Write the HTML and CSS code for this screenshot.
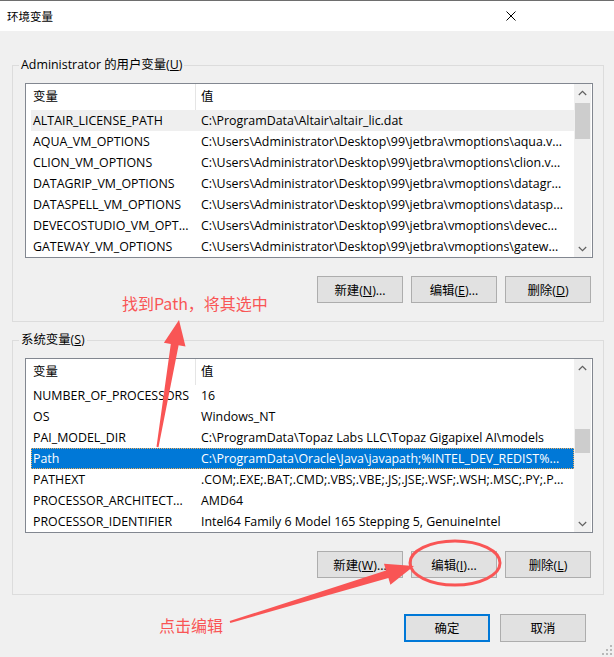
FILE: index.html
```html
<!DOCTYPE html>
<html lang="zh-CN">
<head>
<meta charset="utf-8">
<title>环境变量</title>
<link rel="stylesheet" href="styles.css">
</head>
<body>
<div class="window">
  <header class="titlebar">
    <span class="title">环境变量</span>
    <svg class="close" width="10" height="10" viewBox="0 0 10 10"><path d="M0.5 0.5 L9.5 9.5 M9.5 0.5 L0.5 9.5" stroke="#000" stroke-width="1" fill="none"/></svg>
  </header>
  <main class="content">
    <fieldset class="group">
      <legend>Administrator 的用户变量(<u>U</u>)</legend>
      <div class="list">
        <div class="table">
          <div class="thead"><span class="h1">变量</span><span class="h2">值</span></div>
          <div class="row inactive"><span class="c1">ALTAIR_LICENSE_PATH</span><span class="c2">C:\ProgramData\Altair\altair_lic.dat</span></div>
          <div class="row"><span class="c1">AQUA_VM_OPTIONS</span><span class="c2">C:\Users\Administrator\Desktop\99\jetbra\vmoptions\aqua.v...</span></div>
          <div class="row"><span class="c1">CLION_VM_OPTIONS</span><span class="c2">C:\Users\Administrator\Desktop\99\jetbra\vmoptions\clion.v...</span></div>
          <div class="row"><span class="c1">DATAGRIP_VM_OPTIONS</span><span class="c2">C:\Users\Administrator\Desktop\99\jetbra\vmoptions\datagr...</span></div>
          <div class="row"><span class="c1">DATASPELL_VM_OPTIONS</span><span class="c2">C:\Users\Administrator\Desktop\99\jetbra\vmoptions\datasp...</span></div>
          <div class="row"><span class="c1">DEVECOSTUDIO_VM_OPT...</span><span class="c2">C:\Users\Administrator\Desktop\99\jetbra\vmoptions\devec...</span></div>
          <div class="row"><span class="c1">GATEWAY_VM_OPTIONS</span><span class="c2">C:\Users\Administrator\Desktop\99\jetbra\vmoptions\gatew...</span></div>
        </div>
        <div class="scrollbar">
          <div class="sb-btn"><svg width="9" height="6" viewBox="0 0 9 6"><path d="M0.8 5 L4.5 1.3 L8.2 5" stroke="#606060" stroke-width="1.2" fill="none"/></svg></div>
          <div class="track"><div class="thumb t1"></div></div>
          <div class="sb-btn"><svg width="9" height="6" viewBox="0 0 9 6"><path d="M0.8 1 L4.5 4.7 L8.2 1" stroke="#606060" stroke-width="1.2" fill="none"/></svg></div>
        </div>
      </div>
      <div class="btns">
        <button type="button">新建(<u>N</u>)...</button>
        <button type="button">编辑(<u>E</u>)...</button>
        <button type="button">删除(<u>D</u>)</button>
      </div>
    </fieldset>

    <fieldset class="group sys">
      <legend>系统变量(<u>S</u>)</legend>
      <div class="list">
        <div class="table">
          <div class="thead"><span class="h1">变量</span><span class="h2">值</span></div>
          <div class="row"><span class="c1">NUMBER_OF_PROCESSORS</span><span class="c2">16</span></div>
          <div class="row"><span class="c1">OS</span><span class="c2">Windows_NT</span></div>
          <div class="row"><span class="c1">PAI_MODEL_DIR</span><span class="c2">C:\ProgramData\Topaz Labs LLC\Topaz Gigapixel AI\models</span></div>
          <div class="row selected"><span class="c1">Path</span><span class="c2">C:\ProgramData\Oracle\Java\javapath;%INTEL_DEV_REDIST%...</span></div>
          <div class="row"><span class="c1">PATHEXT</span><span class="c2">.COM;.EXE;.BAT;.CMD;.VBS;.VBE;.JS;.JSE;.WSF;.WSH;.MSC;.PY;.P...</span></div>
          <div class="row"><span class="c1">PROCESSOR_ARCHITECT...</span><span class="c2">AMD64</span></div>
          <div class="row"><span class="c1">PROCESSOR_IDENTIFIER</span><span class="c2">Intel64 Family 6 Model 165 Stepping 5, GenuineIntel</span></div>
        </div>
        <div class="scrollbar">
          <div class="sb-btn"><svg width="9" height="6" viewBox="0 0 9 6"><path d="M0.8 5 L4.5 1.3 L8.2 5" stroke="#606060" stroke-width="1.2" fill="none"/></svg></div>
          <div class="track"><div class="thumb t2"></div></div>
          <div class="sb-btn"><svg width="9" height="6" viewBox="0 0 9 6"><path d="M0.8 1 L4.5 4.7 L8.2 1" stroke="#606060" stroke-width="1.2" fill="none"/></svg></div>
        </div>
      </div>
      <div class="btns">
        <button type="button">新建(<u>W</u>)...</button>
        <button type="button">编辑(<u>I</u>)...</button>
        <button type="button">删除(<u>L</u>)</button>
      </div>
    </fieldset>

    <div class="footer">
      <button type="button" class="primary">确定</button>
      <button type="button">取消</button>
    </div>
  </main>

  <svg class="grip" width="12" height="12" viewBox="0 0 12 12">
    <rect x="9" y="1" width="2" height="2" fill="#b8b8b8"/>
    <rect x="5" y="5" width="2" height="2" fill="#b8b8b8"/>
    <rect x="9" y="5" width="2" height="2" fill="#b8b8b8"/>
    <rect x="1" y="9" width="2" height="2" fill="#b8b8b8"/>
    <rect x="5" y="9" width="2" height="2" fill="#b8b8b8"/>
    <rect x="9" y="9" width="2" height="2" fill="#b8b8b8"/>
  </svg>

  <svg class="annot" width="614" height="657" viewBox="0 0 614 657">
    <polygon points="179,320 185.5,346.5 178.6,345.3 158.5,447.2 156.5,446.8 170.8,343.9 163.9,342.7" fill="#f95555"/>
    <polygon points="414,566 390.4,584.7 388.4,578 230.3,623 229.7,621 386,570.4 384,563.7" fill="#f95555"/>
    <ellipse cx="455" cy="563" rx="45" ry="22" fill="none" stroke="#f95555" stroke-width="3"/>
  </svg>
  <div class="note note1">找到Path，将其选中</div>
  <div class="note note2">点击编辑</div>
</div>
</body>
</html>
```

FILE: styles.css
```css
* {
  box-sizing: border-box;
}

body {
  margin: 0;
  background: #f0f0f0;
  font-family: "Open Sans", "Noto Sans CJK SC", sans-serif;
  font-size: 12.4px;
  color: #000;
}

.window {
  position: relative;
  width: 614px;
  height: 657px;
  background: #f0f0f0;
  overflow: hidden;
}

.titlebar {
  height: 31px;
  background: #fff;
  border-top: 1px solid #6e6e6e;
  display: flex;
  align-items: center;
  justify-content: space-between;
  padding: 0 98px 0 7px;
}

.title {
  font-size: 11.5px;
  font-family: "Noto Sans CJK SC", sans-serif;
}

.content {
  padding: 0 10px 0 12px;
}

.group {
  margin: 26px 0 0;
  padding: 10px 10px 18px 6px;
  border: 1px solid #dcdcdc;
  min-width: 0;
}

.group + .group {
  margin-top: 10px;
}

.group.sys {
  padding-bottom: 16px;
}

legend {
  padding: 0 2px;
  line-height: 16px;
}

.list {
  margin-left: 6px;
  height: 175px;
  border: 1px solid #828790;
  background: #fff;
  display: flex;
  padding-right: 1px;
}

.table {
  flex: 1;
  min-width: 0;
}

.thead {
  height: 26px;
  display: flex;
  line-height: 26px;
}

.h1 {
  width: 170px;
  padding-left: 7px;
  border-right: 1px solid #e5e5e5;
}

.h2 {
  padding-left: 5px;
}

.row {
  height: 21px;
  margin-left: 5px;
  display: flex;
  line-height: 21px;
  white-space: nowrap;
}

.c1 {
  width: 164px;
  flex: none;
  padding-left: 2px;
  overflow: hidden;
}

.c2 {
  flex: 1;
  min-width: 0;
  padding-left: 6px;
  overflow: hidden;
}

.row.inactive {
  background: #efefef;
}

.row.selected {
  background: #0078d7;
  color: #fff;
  outline: 1px dotted #f0b060;
  outline-offset: -1px;
}

.scrollbar {
  width: 17px;
  flex: none;
  background: #f0f0f0;
  display: flex;
  flex-direction: column;
}

.sb-btn {
  height: 17px;
  flex: none;
  display: flex;
  align-items: center;
  justify-content: center;
}

.track {
  flex: 1;
  padding: 0 1px;
}

.thumb {
  background: #cdcdcd;
}

.thumb.t1 {
  margin-top: 2px;
  height: 36px;
}

.thumb.t2 {
  margin-top: 53px;
  height: 24px;
}

.btns {
  display: flex;
  justify-content: flex-end;
  gap: 8px;
  margin-top: 18px;
  padding-right: 2px;
}

button {
  width: 86px;
  height: 27px;
  border: 1px solid #adadad;
  background: #e1e1e1;
  font: inherit;
  color: #000;
  padding: 0;
  margin: 0;
}

.footer {
  display: flex;
  justify-content: flex-end;
  gap: 10px;
  margin-top: 19px;
  padding-right: 18px;
}

.footer button {
  height: 28px;
}

.footer .primary {
  border: 2px solid #0078d7;
}

.grip {
  position: absolute;
  right: 1px;
  bottom: 1px;
}

.annot {
  position: absolute;
  left: 0;
  top: 0;
  pointer-events: none;
}

.note {
  position: absolute;
  color: #f95555;
  font-size: 16px;
  line-height: 20px;
  font-family: "Noto Sans CJK SC", sans-serif;
  white-space: nowrap;
}

.note1 {
  left: 122px;
  top: 293px;
}

.note2 {
  left: 159px;
  top: 615px;
}
```
